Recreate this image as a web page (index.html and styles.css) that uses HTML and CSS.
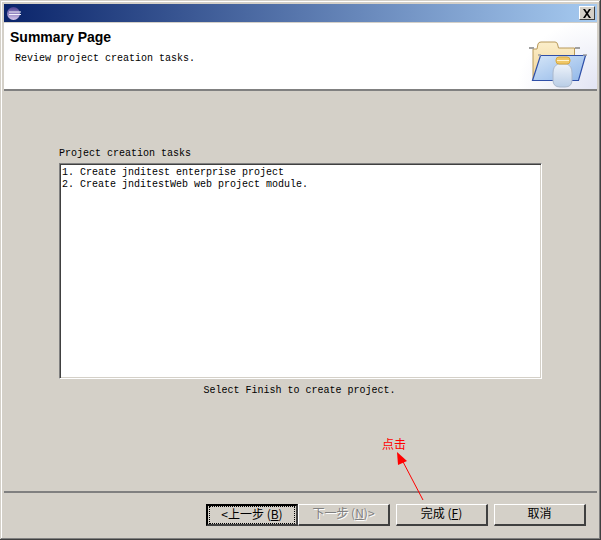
FILE: index.html
```html
<!DOCTYPE html>
<html lang="en">
<head>
<meta charset="utf-8">
<title>Summary Page</title>
<link rel="stylesheet" href="styles.css">
</head>
<body>
<div class="window">
  <div class="titlebar">
    <svg class="app-icon" width="14" height="13" viewBox="0 0 14 13">
      <defs>
        <linearGradient id="eg" x1="0" y1="0" x2="0" y2="1">
          <stop offset="0" stop-color="#4a3f90"/>
          <stop offset="1" stop-color="#d8c8ee"/>
        </linearGradient>
      </defs>
      <circle cx="6.500" cy="6.500" r="6.500" fill="url(#eg)"/>
      <rect x="2" y="4.500" width="12" height="1" fill="#f4f2fb"/>
      <rect x="2" y="7" width="12" height="1" fill="#f4f2fb"/>
    </svg>
    <span class="close">
      <svg width="10" height="9" viewBox="0 0 10 9"><path d="M1 0h2l2 3 2-3h2L6 4.500l3 4.500H7L5 6 3 9H1l3-4.500z" fill="#000"/></svg>
    </span>
  </div>
  <header class="banner">
    <div class="banner-text">
      <h1 class="banner-title">Summary Page</h1>
      <p class="banner-desc">Review project creation tasks.</p>
    </div>
    <svg class="banner-art" width="60" height="48" viewBox="0 0 60 48">
      <defs>
        <linearGradient id="fold" x1="0" y1="0" x2="0" y2="1">
          <stop offset="0" stop-color="#fbeecb"/>
          <stop offset="1" stop-color="#f2d596"/>
        </linearGradient>
        <linearGradient id="front" x1="0" y1="0" x2="1" y2="1">
          <stop offset="0" stop-color="#d6e6f8"/>
          <stop offset="1" stop-color="#8fb6e8"/>
        </linearGradient>
        <linearGradient id="bottle" x1="0" y1="0" x2="0" y2="1">
          <stop offset="0" stop-color="#eef3fa"/>
          <stop offset="1" stop-color="#b9cde6"/>
        </linearGradient>
      </defs>
      <path d="M5 9h4l1-5q.5-2 3-2h14q2 0 2.500 2l1 4h16v32H5z" fill="url(#fold)" stroke="#b8995a"/>
      <path d="M1 8h5M47 8h5" stroke="#a0a0a0" stroke-width="2"/>
      <path d="M12.500 15.500h45L50.500 40.500h-46z" fill="url(#front)" stroke="#2f4fa8" stroke-width="1.200"/>
      <path d="M10 15h3M55 15h4" stroke="#a0a0a0" stroke-width="1.500"/>
      <path d="M30 24q-5 2-5 9v7q0 7 7 7h5q7 0 7-7v-7q0-7-5-9z" fill="url(#bottle)" stroke="#aab8cc"/>
      <rect x="28" y="17" width="14" height="7" rx="3" fill="#f0c766" stroke="#d8a83e"/>
      <rect x="29" y="20" width="12" height="1" fill="#fff3cf"/>
    </svg>
  </header>
  <main class="content">
    <section class="tasks">
      <div class="tasks-label">Project creation tasks</div>
      <div class="tasks-box">1. Create jnditest enterprise project
2. Create jnditestWeb web project module.</div>
      <div class="tasks-hint">Select Finish to create project.</div>
    </section>
    <div class="annotation">点击</div>
    <svg class="arrow" width="34" height="54" viewBox="0 0 34 54">
      <path d="M31 49L9 7" stroke="#f00" fill="none"/>
      <path d="M5 1L15 10 6 14z" fill="#f00"/>
    </svg>
  </main>
  <footer class="footer">
    <div class="button default"><span class="focus">&lt;上一步 (<u>B</u>)</span></div>
    <div class="button disabled"><span class="focus">下一步 (<u>N</u>)&gt;</span></div>
    <div class="button finish"><span class="focus">完成 (<u>F</u>)</span></div>
    <div class="button"><span class="focus">取消</span></div>
  </footer>
</div>
</body>
</html>
```
FILE: styles.css
```css
* { box-sizing: border-box; }
html, body { margin: 0; padding: 0; }
body {
  width: 601px;
  height: 540px;
  overflow: hidden;
  background: #d4d0c8;
  font-family: "Liberation Mono", "Noto Sans CJK SC", monospace;
  font-size: 10px;
  color: #000;
}
.window {
  width: 601px;
  height: 540px;
  display: flex;
  flex-direction: column;
  padding: 4px 4px 3px 4px;
  background: #d4d0c8;
  box-shadow:
    inset -1px -1px 0 #404040,
    inset 1px 1px 0 #d4d0c8,
    inset -2px -2px 0 #808080,
    inset 2px 2px 0 #fff;
}
.titlebar {
  height: 18px;
  flex: none;
  display: flex;
  align-items: center;
  justify-content: space-between;
  padding: 0 2px 0 3px;
  background: linear-gradient(90deg, #0a246a 0%, #a6caf0 100%);
}
.close {
  width: 16px;
  height: 14px;
  display: flex;
  align-items: center;
  justify-content: center;
  background: #d4d0c8;
  border-style: solid;
  border-width: 1px;
  border-color: #fff #404040 #404040 #fff;
}
.banner {
  height: 66px;
  flex: none;
  margin-top: 1px;
  display: flex;
  justify-content: space-between;
  background: radial-gradient(ellipse 80px 70px at 100% 100%, #e2e4f3 0%, #fff 100%);
}
.banner-text { padding: 6px 0 0 6px; }
.banner-title {
  margin: 0;
  font-family: "Liberation Sans", Arial, sans-serif;
  font-size: 14px;
  font-weight: 700;
  line-height: 16px;
}
.banner-desc {
  margin: 7px 0 0 5px;
  line-height: 13px;
  white-space: pre;
}
.banner-art { margin: 17px 9px 0 0; flex: none; }
.content {
  flex: 1;
  position: relative;
  border-top: 2px solid;
  border-image: linear-gradient(#808080 50%, #fff 50%) 2;
}
.tasks {
  width: 483px;
  margin: 56px 0 0 55px;
  display: flex;
  flex-direction: column;
}
.tasks-label { line-height: 13px; white-space: pre; }
.tasks-box {
  height: 216px;
  margin-top: 3px;
  padding: 3px 2px 0;
  background: #fff;
  white-space: pre;
  line-height: 12px;
  border-style: solid;
  border-width: 1px;
  border-color: #808080 #fff #fff #808080;
  box-shadow: inset 1px 1px 0 #404040, inset -1px -1px 0 #d4d0c8;
}
.tasks-hint {
  margin-top: 5px;
  padding-right: 2px;
  line-height: 13px;
  text-align: center;
  white-space: pre;
}
.annotation {
  position: absolute;
  left: 378px;
  top: 346px;
  color: #f00;
  font-family: "Noto Sans CJK SC", sans-serif;
  font-size: 12px;
  line-height: 14px;
}
.arrow {
  position: absolute;
  left: 388px;
  top: 360px;
}
.footer {
  height: 46px;
  flex: none;
  display: flex;
  padding: 11px 0 0 202px;
  border-top: 2px solid;
  border-image: linear-gradient(#808080 50%, #fff 50%) 2;
}
.button {
  width: 92px;
  height: 22px;
  display: flex;
  align-items: center;
  justify-content: center;
  padding-bottom: 3px;
  font-family: "Noto Sans CJK SC", sans-serif;
  font-size: 12px;
  background: #d4d0c8;
  border-style: solid;
  border-width: 1px 2px 2px 1px;
  border-color: #fff #404040 #404040 #fff;
}
.button + .button { margin-left: 6px; }
.button .focus { line-height: 14px; white-space: pre; }
.button.default {
  padding-bottom: 0;
  border: 2px solid #000;
  border-right-color: #404040;
  border-bottom-color: #404040;
}
.button.default .focus {
  width: 84px;
  height: 16px;
  text-align: center;
  outline: 1px dotted #000;
}
.button.default + .button.disabled { margin-left: 0; }
.button.disabled {
  color: #808080;
  text-shadow: 1px 1px 0 #fff;
}
```
